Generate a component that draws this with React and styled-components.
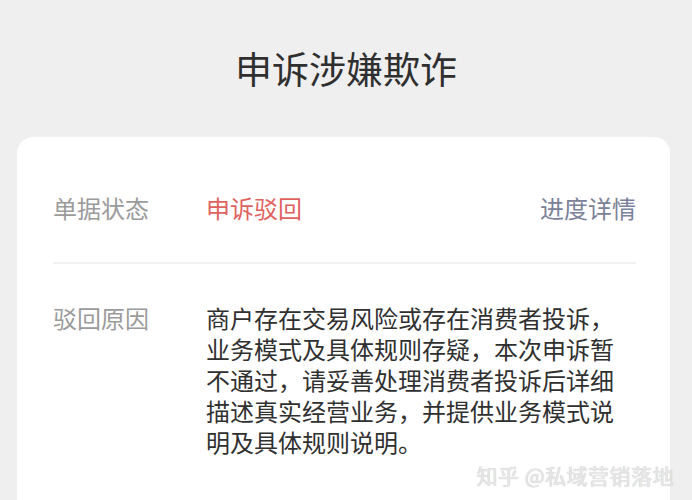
import React from "react";
import styled, { createGlobalStyle } from "styled-components";

const GlobalStyle = createGlobalStyle`
	html, body {
		margin: 0;
		padding: 0;
		background: #efefef;
		overflow: hidden;
	}
	body {
		font-family: "Noto Sans CJK SC", "Noto Sans", sans-serif;
	}
`;

const rows = [
	{
		label: "单据状态",
		value: "申诉驳回",
		tone: "alert",
		action: "进度详情"
	},
	{
		label: "驳回原因",
		value:
			"商户存在交易风险或存在消费者投诉，业务模式及具体规则存疑，本次申诉暂不通过，请妥善处理消费者投诉后详细描述真实经营业务，并提供业务模式说明及具体规则说明。"
	}
];

const App = () => (
	<Page>
		<GlobalStyle />
		<Title>申诉涉嫌欺诈</Title>
		<Card>
			{rows.map((row, i) => (
				<Row key={row.label} first={i === 0}>
					<Label>{row.label}</Label>
					<Value tone={row.tone}>{row.value}</Value>
					{row.action && <Action>{row.action}</Action>}
				</Row>
			))}
		</Card>
		<Watermark>知乎 @私域营销落地</Watermark>
	</Page>
);

const Page = styled.div`
	position: relative;
	height: 500px;
	overflow: hidden;
`;

const Title = styled.h1`
	margin: 0;
	padding-top: 46px;
	height: 91px;
	box-sizing: border-box;
	text-align: center;
	font-size: 37px;
	line-height: 44px;
	font-weight: 400;
	color: #2f2f2f;
`;

const Card = styled.div`
	margin: 46px 22px 0 17px;
	padding: 0 34px 200px 36px;
	background: #ffffff;
	border-radius: 16px;
`;

const Row = styled.div`
	display: grid;
	grid-template-columns: 153px 1fr auto;
	align-items: start;
	padding: ${({ first }) => (first ? "55px 0 38px" : "38px 0 0")};
	border-bottom: ${({ first }) => (first ? "2px solid #f1f1f1" : "none")};
`;

const Label = styled.span`
	font-size: 24px;
	line-height: 32px;
	color: #9b9b9b;
`;

const Value = styled.span`
	font-size: 24px;
	line-height: 31px;
	max-width: 410px;
	color: ${({ tone }) => (tone === "alert" ? "#e0625f" : "#303030")};
`;

const Action = styled.span`
	font-size: 24px;
	line-height: 32px;
	color: #7b8198;
`;

/* faint site watermark stamped over the corner */
const Watermark = styled.div`
	position: absolute;
	right: 18px;
	top: 465px;
	font-size: 21px;
	line-height: 20px;
	color: #e8e8e8;
	text-shadow: 0 0 1px rgba(0, 0, 0, 0.3);
	letter-spacing: 0.5px;
`;

export default App;
